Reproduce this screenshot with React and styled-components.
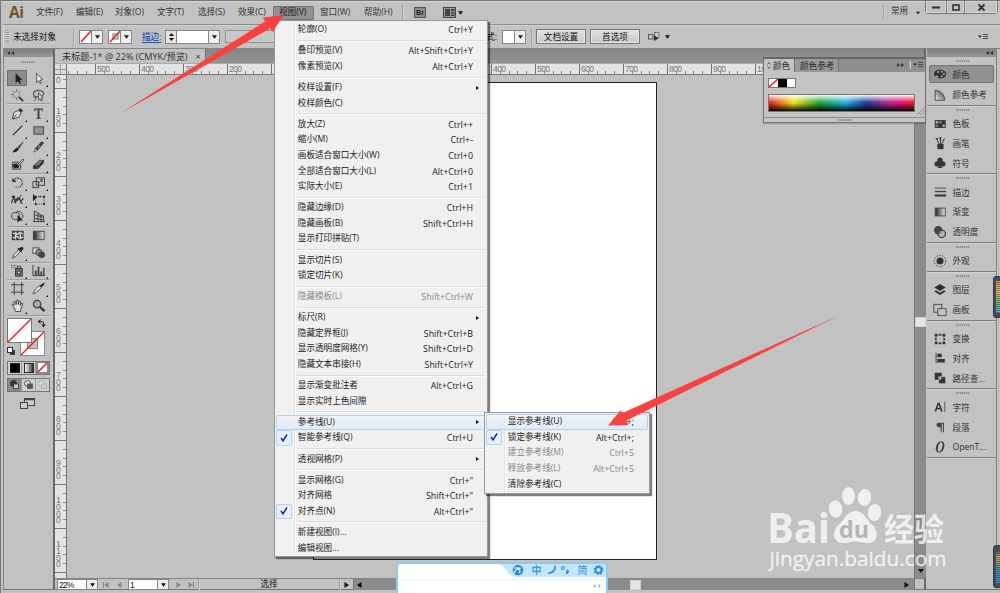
import React from "react";
import styled, { createGlobalStyle, css } from "styled-components";

const Global = createGlobalStyle`
  * { box-sizing: border-box; }
  html, body { margin: 0; padding: 0; overflow: hidden; }
  body { font-family: "Open Sans", "Noto Sans CJK SC", sans-serif; font-size: 8.6px; color: #222; }
`;

/* ---------- window frame ---------- */
const Window = styled.div`
  position: relative;
  width: 1000px;
  height: 593px;
  overflow: hidden;
  display: flex;
  flex-direction: column;
  background: #c2c2c2;
  border-top: 1px solid #777;
  border-left: 1px solid #777;
  box-shadow: inset 0 1px #d5d5d5;
`;

const MenuBar = styled.div`
  height: 23px;
  flex: none;
  display: flex;
  align-items: flex-start;
  padding-left: 8px;
`;

const Logo = styled.span`
  width: 21px;
  margin-right: 0;
  font: 700 15.5px/22px "Open Sans", sans-serif;
  letter-spacing: -0.5px;
  color: #74512b;
`;

const MenuTitle = styled.span`
  width: ${(p) => p.$w}px;
  height: 14px;
  margin-top: 5px;
  padding-left: 6px;
  line-height: 13px;
  white-space: nowrap;
  color: #333;
  ${(p) => p.$open && css`
    background: #929292;
    border: 1px solid #757575;
    border-radius: 1px;
    padding-left: 5px;
    line-height: 11px;
    color: #222;
  `}
`;

const Divider = styled.i`
  width: 1px;
  height: ${(p) => p.$h || 14}px;
  flex: none;
  margin: ${(p) => p.$m || "0"};
  background: #a0a0a0;
  box-shadow: 1px 0 #d0d0d0;
`;

const BridgeIcon = styled.span`
  width: 12px;
  height: 11px;
  margin: 6px 17px 0 11px;
  border: 1px solid #555;
  background: #8d8d8d;
  color: #222;
  font: 700 7px/9px "Liberation Sans", sans-serif;
  text-align: center;
`;

const Svg = styled.svg`
  display: block;
  flex: none;
  overflow: visible;
  margin: ${(p) => p.$m || "0"};
`;

const Workspace = styled.span`
  width: 26px;
  line-height: 20px;
  margin-left: 7px;
  color: #333;
`;

const WindowButtons = styled.div`
  display: flex;
  width: 73px;
  height: 14px;
  margin: -1px 2px 0 auto;
  border: 1px solid #777;
  border-radius: 0 0 3px 3px;
`;

const WindowButton = styled.span`
  width: ${(p) => p.$w}px;
  display: flex;
  align-items: center;
  justify-content: center;
  box-shadow: inset 0 0 0 1px #d6d6d6;
  & + & { border-left: 1px solid #777; }
`;

/* ---------- control bar ---------- */
const ControlBar = styled.div`
  height: 25px;
  flex: none;
  display: flex;
  align-items: center;
  margin-left: 2px;
  padding-left: 3px;
  border-top: 1px solid #8d8d8d;
  border-bottom: 1px solid #858585;
  box-shadow: inset 1px 1px #d2d2d2;
`;

const DotGrip = styled.i`
  width: 3px;
  height: 14px;
  margin-right: 4px;
  background: repeating-linear-gradient(#999 0 1px, #ccc 1px 2px);
`;

const Label = styled.span`
  width: ${(p) => p.$w}px;
  white-space: nowrap;
  color: #111;
  text-align: ${(p) => p.$align || "left"};
`;

const StrokeLink = styled.span`
  width: 23px;
  color: #2456bd;
  font-weight: 500;
  text-decoration: underline;
  text-underline-offset: 2px;
`;

const Combo = styled.span`
  display: flex;
  width: ${(p) => p.$w}px;
  height: ${(p) => p.$h || 14}px;
  flex: none;
  margin: ${(p) => p.$m || "0"};
  border: 1px solid #858585;
  background: #fff;
`;

const ComboValue = styled.span`
  flex: 1;
  min-width: 0;
  display: flex;
  align-items: center;
  justify-content: ${(p) => (p.$text ? "flex-start" : "center")};
  padding-left: ${(p) => (p.$text ? 1 : 0)}px;
  font: 8.5px/10px "Liberation Sans", sans-serif;
  letter-spacing: -0.9px;
  color: #111;
`;

const ComboArrow = styled.span`
  width: 11px;
  display: flex;
  align-items: center;
  justify-content: center;
  border-left: 1px solid #858585;
  background: #eee;
`;

const Stepper = styled.span`
  width: 11px;
  display: flex;
  flex-direction: column;
  align-items: center;
  justify-content: space-evenly;
  border-right: 1px solid #858585;
  background: #e4e4e4;
`;

const Field = styled.span`
  width: 53px;
  height: 13px;
  border: 1px solid #939393;
  background: #c8c8c8;
`;

const BarButton = styled.button`
  width: 50px;
  height: 15px;
  flex: none;
  margin: 0 4px 0 0;
  padding: 0;
  border: 1px solid #777;
  box-shadow: inset 0 0 0 1px #e8e8e8;
  background: linear-gradient(#e2e2e2, #c9c9c9);
  font: inherit;
  line-height: 12px;
  color: #111;
`;

/* ---------- tools panel ---------- */
const Body = styled.div`
  height: 541px;
  flex: none;
  display: flex;
  margin-left: 2px;
  border-left: 1px solid #858585;
  border-bottom: 1px solid #777;
`;

const PanelHeader = styled.div`
  height: 8px;
  flex: none;
  display: flex;
  align-items: center;
  justify-content: ${(p) => (p.$end ? "flex-end" : "flex-start")};
  padding: 0 3px;
  background: linear-gradient(#7f7f7f, #969696);
`;

const Tools = styled.div`
  width: 49px;
  flex: none;
  display: flex;
  flex-direction: column;
  background: #c2c2c2;
`;

const Grip = styled.i`
  display: block;
  width: 14px;
  height: 2px;
  margin: ${(p) => p.$m || "0 auto"};
  background: repeating-linear-gradient(90deg, #8c8c8c 0 1px, #b4b4b4 1px 2px);
`;

const ToolGroup = styled.div`
  display: grid;
  grid-template-columns: 21px 21px;
  grid-auto-rows: ${(p) => p.$row || 16.8}px;
  margin: 0 3px;
  padding: ${(p) => p.$p || "1px 0"};
  border-bottom: 1px solid ${(p) => (p.$plain ? "transparent" : "#9d9d9d")};
  box-shadow: 0 1px ${(p) => (p.$plain ? "transparent" : "#cfcfcf")};
`;

const Tool = styled.span`
  position: relative;
  display: flex;
  align-items: center;
  justify-content: center;
  ${(p) => p.$active && css`
    width: 20px;
    height: 16px;
    background: #8b8b8b;
    border: 1px solid #707070;
  `}
  ${(p) => p.$more && css`
    &::after {
      content: "";
      position: absolute;
      right: 1px;
      bottom: 0;
      border: 1.3px solid #111;
      border-top-color: transparent;
      border-left-color: transparent;
    }
  `}
`;

const ButtonTrio = styled.div`
  display: flex;
  width: 43px;
  height: 14px;
  margin: ${(p) => p.$m};
  border: 1px solid #777;
`;

const TrioButton = styled.span`
  flex: 1;
  display: flex;
  align-items: center;
  justify-content: center;
  background: ${(p) => (p.$on ? "#8a8a8a" : "#cfcfcf")};
  & + & { border-left: 1px solid #999; }
`;

const ColorChip = styled.i`
  width: 10px;
  height: 10px;
  border: 1px solid #222;
  background: ${(p) => p.$bg};
`;

/* ---------- document ---------- */
const Doc = styled.div`
  width: 873px;
  flex: none;
  display: flex;
  flex-direction: column;
  border-left: 2px solid #696969;
  border-right: 2px solid #696969;
`;

const TabRow = styled.div`
  height: 14px;
  flex: none;
  background: linear-gradient(#868686, #949494);
`;

const Tab = styled.div`
  width: 151px;
  height: 14px;
  display: flex;
  align-items: center;
  padding-left: 7px;
  border-right: 1px solid #777;
  background: #c2c2c2;
  font-size: 9.15px;
  color: #333;
  white-space: nowrap;
`;

const TabClose = styled.span`
  margin-left: 8px;
  font-size: 9px;
`;

const TopRuler = styled.div`
  height: 12px;
  flex: none;
  display: flex;
  overflow: hidden;
  background: #e3e3e3;
  border-top: 1px solid #aaa;
  border-bottom: 1px solid #7a7a7a;
`;

const RulerCorner = styled.span`
  width: 12px;
  flex: none;
  border-right: 1px solid #777;
  background:
    linear-gradient(90deg, transparent 5px, #999 5px 6px, transparent 6px),
    linear-gradient(transparent 5px, #999 5px 6px, transparent 6px), #ddd;
`;

const RulerLead = styled.span`
  width: 28px;
  flex: none;
  background: repeating-linear-gradient(90deg, transparent 0 1.2px, #888 1.2px 2.2px, transparent 2.2px 8.8px) 0 100% / 100% 3px no-repeat;
`;

const RulerCell = styled.span`
  width: 44px;
  flex: none;
  padding-left: 1px;
  border-left: 1px solid #777;
  font: 8.6px/10px "Liberation Sans", sans-serif;
  letter-spacing: -0.6px;
  color: #777;
  background: repeating-linear-gradient(90deg, transparent 0 7.8px, #888 7.8px 8.8px) 0 100% / 100% 3px no-repeat;
`;

const DocMain = styled.div`
  height: 503px;
  flex: none;
  display: flex;
`;

const SideRuler = styled.div`
  width: 12px;
  flex: none;
  overflow: hidden;
  background: #e3e3e3;
  border-right: 1px solid #777;
`;

const SideCell = styled.div`
  width: 11px;
  height: ${(p) => p.$h || 44}px;
  display: flex;
  flex-direction: column;
  justify-content: flex-end;
  padding: 0 0 4px 1px;
  border-bottom: 1px solid #777;
  font: 8.6px/6.7px "Liberation Sans", sans-serif;
  color: #777;
  background: repeating-linear-gradient(0deg, transparent 0 7.8px, #888 7.8px 8.8px) 100% 0 / 3px 100% no-repeat;
`;

const Canvas = styled.div`
  width: 847px;
  flex: none;
  padding: 7px 0 0 246px;
  background: #c2c2c2;
`;

const Artboard = styled.div`
  width: 344px;
  height: 478px;
  border: 1px solid #222;
  background: #fff;
`;

const VScroll = styled.div`
  width: 12px;
  flex: none;
  display: flex;
  flex-direction: column;
  align-items: center;
  justify-content: space-between;
  padding: 242px 0 5px;
  border-left: 1px solid #777;
  background: #8c8c8c;
`;

const Thumb = styled.i`
  display: block;
  width: ${(p) => p.$w || 11}px;
  height: 10px;
  background: #e6e6e6;
  border: 1px solid #d0d0d0;
`;

const Status = styled.div`
  height: 12px;
  flex: none;
  display: flex;
  align-items: center;
  border-top: 1px solid #858585;
  padding-left: 2px;
`;

const StatusText = styled.span`
  width: 140px;
  text-align: center;
  line-height: 11px;
  color: #111;
`;

const HScroll = styled.div`
  width: 562px;
  height: 11px;
  flex: none;
  display: flex;
  align-items: center;
  padding: 0 4px 0 2px;
  background: #8c8c8c;
  border-left: 1px solid #777;
  border-right: 1px solid #777;
`;

const ScrollGap = styled.span`
  flex: ${(p) => p.$grow};
`;

/* ---------- right dock ---------- */
const Dock = styled.div`
  width: 70px;
  flex: none;
  margin-left: 1px;
  border-right: 1px solid #808080;
`;

const DockGroup = styled.div`
  padding: 3px 2px 2px 2px;
  border-bottom: 1px solid #7d7d7d;
  box-shadow: 0 1px #d3d3d3;
  height: ${(p) => p.$n * 19.7 + 9.45}px;
`;

const DockItem = styled.div`
  height: ${(p) => (p.$on ? 18 : 19.7)}px;
  display: flex;
  align-items: center;
  gap: 5.5px;
  padding-left: ${(p) => (p.$on ? 3 : 4)}px;
  white-space: nowrap;
  color: #333;
  ${(p) => p.$on && css`
    margin: 0 0 1.7px;
    border: 1px solid #747474;
    border-radius: 2px;
    background: #919191;
  `}
`;

/* ---------- menus ---------- */
const Popup = styled.div`
  position: absolute;
  left: ${(p) => p.$x}px;
  top: ${(p) => p.$y}px;
  width: ${(p) => p.$w}px;
  height: ${(p) => p.$h}px;
  padding: 1px;
  border: 1px solid #989898;
  box-shadow: 2px 2px 1px rgba(0, 0, 0, 0.5);
  background: linear-gradient(90deg, #f1f1f1 19px, #e2e2e2 19px 20px, #fbfbfb 20px 21px, #f0f0f0 21px);
`;

const MenuRow = styled.div`
  height: 15.6px;
  display: flex;
  align-items: center;
  padding-right: ${(p) => p.$pr || 12}px;
  border: 1px solid transparent;
  border-radius: 2px;
  line-height: 13px;
  white-space: nowrap;
  color: ${(p) => (p.$off ? "#888" : "#1a1a1a")};
  ${(p) => p.$hover && css`
    border-color: #b4d2ee;
    background: linear-gradient(rgba(240, 245, 251, 0.7), rgba(221, 232, 245, 0.8));
  `}
`;

const CheckSlot = styled.span`
  width: 15.6px;
  height: 15.6px;
  margin: 0 6.2px 0 -1px;
  flex: none;
  display: flex;
  align-items: center;
  justify-content: center;
  border-radius: 2px;
  ${(p) => p.$checked && css`
    border: 1px solid #b2d2f2;
    background: #e6effa;
  `}
`;

const Shortcut = styled.span`
  margin-left: auto;
  font-size: 8.9px;
`;

const SubArrow = styled.i`
  margin: 0 -6px 0 auto;
  border: 2.8px solid transparent;
  border-left: 3.4px solid #111;
  border-right: 0;
`;

const MenuLine = styled.div`
  height: 1px;
  margin: 2.25px 1px 2.25px 21px;
  background: #dcdcdc;
  box-shadow: 0 1px #fcfcfc;
`;

/* ---------- floating colour panel ---------- */
const ColorPanel = styled.div`
  position: absolute;
  left: 762px;
  top: 56px;
  width: 163px;
  height: 66px;
  display: flex;
  flex-direction: column;
  border: 1px solid #777;
  border-top: 2px solid #666;
  background: #c4c4c4;
  box-shadow: 0 1px 1px rgba(0, 0, 0, 0.2);
`;

const ColorTabs = styled.div`
  height: 13px;
  flex: none;
  display: flex;
  background: #8f8f8f;
`;

const ColorTab = styled.span`
  width: ${(p) => p.$w}px;
  display: flex;
  align-items: center;
  gap: 2px;
  padding-left: ${(p) => (p.$on ? 3 : 5)}px;
  border-right: 1px solid #737373;
  background: ${(p) => (p.$on ? "#c4c4c4" : "#999")};
  color: #2b2b2b;
  white-space: nowrap;
`;

const ColorBody = styled.div`
  flex: 1;
  display: grid;
  grid-template-columns: 147px 1fr;
  align-content: start;
  padding: 6px 1px 0 4px;
  border-bottom: 1px solid #8d8d8d;
`;

const Chips = styled.div`
  grid-column: 1 / -1;
  display: flex;
  width: 28px;
  height: 10px;
  border: 1px solid #777;
`;

const Chip = styled.i`
  flex: 1;
  background: ${(p) => p.$bg};
`;

const Spectrum = styled.div`
  height: 18px;
  margin-top: 6px;
  border: 1px solid #777;
  background:
    linear-gradient(rgba(255,255,255,0.95), rgba(255,255,255,0) 45%, rgba(0,0,0,0) 50%, rgba(0,0,0,0.95)),
    linear-gradient(90deg, #e8202a, #f3e51b 17%, #21a637 35%, #27b5e8 53%, #21409c 67%, #b82c90 83%, #e5127d 91%, #e8202a);
`;

/* ---------- overlays ---------- */
const EdgeMeter = styled.div`
  position: absolute;
  left: 992px;
  top: ${(p) => p.$y}px;
  width: 9px;
  height: ${(p) => p.$h}px;
  padding: 4px 0 4px 2px;
  border: 1px solid #333a47;
  border-radius: 3px 0 0 3px;
  background: #454c5b;
  &::before {
    content: "";
    display: block;
    width: 4px;
    height: 100%;
    background:
      repeating-linear-gradient(transparent 0 1px, rgba(50, 56, 70, 0.45) 1px 2px),
      linear-gradient(${(p) => p.$colors});
  }
`;

const Ime = styled.div`
  position: absolute;
  left: 395px;
  top: 561px;
  width: 212px;
  height: 36px;
  border: 2px solid #8ccbf3;
  border-radius: 5px;
  background: linear-gradient(#fff 15px, #e3f3fd 16px, #fff 17px);
  overflow: hidden;
`;

const ImeBar = styled.div`
  display: flex;
  justify-content: flex-end;
`;

const Watermark = styled.div`
  position: absolute;
  left: 765px;
  top: 484px;
  width: 186px;
  height: 90px;
`;

const Overlay = styled.svg`
  position: absolute;
  left: -1px;
  top: -1px;
  pointer-events: none;
`;

/* ---------- data ---------- */
const viewMenu = [
  ["轮廓(O)", "Ctrl+Y"], "-",
  ["叠印预览(V)", "Alt+Shift+Ctrl+Y"], ["像素预览(X)", "Alt+Ctrl+Y"], "-",
  ["校样设置(F)", ">"], ["校样颜色(C)"], "-",
  ["放大(Z)", "Ctrl++"], ["缩小(M)", "Ctrl+-"], ["画板适合窗口大小(W)", "Ctrl+0"],
  ["全部适合窗口大小(L)", "Alt+Ctrl+0"], ["实际大小(E)", "Ctrl+1"], "-",
  ["隐藏边缘(D)", "Ctrl+H"], ["隐藏画板(B)", "Shift+Ctrl+H"], ["显示打印拼贴(T)"], "-",
  ["显示切片(S)"], ["锁定切片(K)"], "-",
  ["隐藏模板(L)", "Shift+Ctrl+W", { off: true }], "-",
  ["标尺(R)", ">"], ["隐藏定界框(J)", "Shift+Ctrl+B"], ["显示透明度网格(Y)", "Shift+Ctrl+D"],
  ["隐藏文本串接(H)", "Shift+Ctrl+Y"], "-",
  ["显示渐变批注者", "Alt+Ctrl+G"], ["显示实时上色间隙"], "-",
  ["参考线(U)", ">", { hover: true }], ["智能参考线(Q)", "Ctrl+U", { checked: true }], "-",
  ["透视网格(P)", ">"], "-",
  ["显示网格(G)", "Ctrl+\""], ["对齐网格", "Shift+Ctrl+\""], ["对齐点(N)", "Alt+Ctrl+\"", { checked: true }], "-",
  ["新建视图(I)..."], ["编辑视图..."],
];

const guidesMenu = [
  ["显示参考线(U)", "Ctrl+;", { hover: true }],
  ["锁定参考线(K)", "Alt+Ctrl+;", { checked: true }],
  ["建立参考线(M)", "Ctrl+5", { off: true }],
  ["释放参考线(L)", "Alt+Ctrl+5", { off: true }],
  ["清除参考线(C)"],
];

const S = { fill: "none", stroke: "#3c3c3c", strokeWidth: 1 };

/* Tool glyphs, drawn on a 14 x 14 grid */
const toolArt = {
  select: <path d="M5 1v11l2.6-2.4 1.6 3.4 1.6-.8-1.6-3.2 3-.3z" fill="#1e1e1e" />,
  direct: <path d="M5 1.500v10l2.300-2.300 1.500 3.300 1.300-.6-1.500-3.200 3-.3z" fill="#e8e8e8" stroke="#333" strokeWidth=".8" />,
  wand: <><path d="M8.500 8.500l4.500 4.500" stroke="#333" strokeWidth="2" /><circle cx="6" cy="6" r="3.300" {...S} stroke="#666" strokeDasharray="1.500 1" /><path d="M6 0v2M1.500 2L3 3.500M0 6h2M6 10v2M10.500 2L9 3.500M2 10l1-1" {...S} stroke="#666" /></>,
  lasso: <><ellipse cx="7" cy="5" rx="5.500" ry="3.500" {...S} stroke="#555" strokeWidth="1.300" /><path d="M3 7c-2 1 0 3 1 2s-1 3-1 4" {...S} /><path d="M7 4v8l1.800-1.600 1.200 2.600 1-.5-1-2.500 2-.3z" fill="#ddd" stroke="#333" strokeWidth=".8" /></>,
  pen: <><path d="M1.500 13L3 6l5-2.500 3 3L8.500 11z" fill="#ddd" stroke="#444" /><path d="M8 3l2-2 3 3-2 2z" fill="#333" /><path d="M1.500 13l4.500-5" {...S} /></>,
  type: <path d="M2.500 1.500h9v3h-.9c0-1.300-.5-1.900-2.600-1.900v8.800l1.600.4v.8H4.400v-.8l1.600-.4V2.600c-2.100 0-2.600.6-2.600 1.900h-.9z" fill="#3a3a3a" />,
  line: <path d="M2 12L12 2" stroke="#222" strokeWidth="1.100" />,
  rect: <rect x="2" y="3" width="10.500" height="8" fill="#929292" stroke="#444" />,
  brush: <><path d="M13 1L6.500 7.500l1.500 1.500z" fill="#555" stroke="#333" strokeWidth=".7" /><path d="M6.500 7.500C4 7.500 4 10 1 12c4 .8 7-1 7-3z" fill="#222" /></>,
  pencil: <><path d="M12.500 2L10.500.7 3.500 8 5.800 10z" fill="#444" stroke="#222" strokeWidth=".7" /><path d="M3.500 8l-1.300 4L5.800 10z" fill="#e2e2e2" stroke="#333" strokeWidth=".7" /><path d="M6.500 5L9 7.200" stroke="#bbb" /></>,
  blob: <><path d="M2 4.500h6.500M1.500 4.500v7.500h9V7" {...S} /><ellipse cx="5.500" cy="8.500" rx="3.500" ry="2.600" fill="#222" /><path d="M13 1L7 7l1 1 5.500-5z" fill="#ddd" stroke="#222" strokeWidth=".8" /></>,
  eraser: <><path d="M1.500 8.500L8 2.500h4.500L6.500 9z" fill="#777" stroke="#222" strokeWidth=".7" /><path d="M1.500 8.500v3H6v-2.500zM6.500 9v2.500L12.500 5V2.500z" fill="#333" stroke="#222" strokeWidth=".5" /></>,
  rotate: <><path d="M4 3.500A5 5 0 1 1 9 12" {...S} strokeDasharray="2 .8" strokeWidth="1.200" /><path d="M1.500 2v4.500H6z" fill="#333" /><path d="M8.500 12H3.500" {...S} strokeDasharray="1 1" /></>,
  scale: <><rect x="1" y="6" width="6" height="6.500" {...S} /><rect x="4.500" y="2" width="9" height="8" {...S} /><path d="M7 8l4-4M8.500 4H11v2.500" {...S} /></>,
  width: <><path d="M.5 11c2-7 3-7 4 0 1-4 3-8 5-4s2-1 4-1M.5 4c3-1 4 7 7 3s2 5 5 4" {...S} strokeWidth="1.500" /><circle cx="3" cy="4" r="1.300" fill="#222" /><path d="M11 2L8 7" {...S} /></>,
  free: <><path d="M1 1v8l4-4z" fill="#222" /><rect x="4" y="4" width="9" height="8" {...S} strokeDasharray="1.200 1.200" /><path d="M3 3h2v2H3zM12 3h2v2h-2zM3 11h2v2H3zM12 11h2v2h-2zM8 3h1.500v1.500H8z" fill="#222" /></>,
  builder: <><ellipse cx="5" cy="6.500" rx="4.500" ry="3.800" {...S} /><path d="M5 3c2-3 7-1 7 2 2 1 1 4-1 4" {...S} /><path d="M7 5v8.500l2-1.800 3.800-.4z" fill="#222" /></>,
  perspective: <><path d="M2.500 1v12M2.500 1l4 2v10M6.500 4l3 1v8M9.500 5.500l3 .8V13M2.500 5l10 3M2.500 9l10 1.500M1 12.500h13" {...S} /></>,
  mesh: <><rect x="1.500" y="2.500" width="11.500" height="9" fill="#555" stroke="#333" /><path d="M2 5c3-2 3 3 6 0s3 1 5 0M2 9c3 2 3-3 6 0s3-1 5 0M5 3c2 3-2 5 0 8M10 3c-2 3 2 5 0 8" fill="none" stroke="#e3e3e3" strokeWidth="1.200" /></>,
  gradient: <rect x="1.500" y="2.500" width="11.500" height="9" fill="url(#toolGradient)" stroke="#444" />,
  dropper: <><path d="M13 1.500C12 0 10.500 1 9 2.500L8 2 7 3l4 4 1-1-.7-1C13 3.500 14 2.500 13 1.500z" fill="#222" /><path d="M8 4L3 9.500 1.500 13l3.500-1.500L10 6z" fill="#ddd" stroke="#333" strokeWidth=".8" /></>,
  blend: <><rect x="1" y="2" width="6.500" height="6" fill="#ddd" stroke="#444" /><circle cx="7.500" cy="7" r="3.500" fill="#888" stroke="#444" /><circle cx="10.500" cy="9.500" r="3.500" fill="#444" /></>,
  spray: <><rect x="5" y="5" width="7" height="8" fill="#777" stroke="#222" /><path d="M7 5V2.500h3.500V5" {...S} /><circle cx="8.500" cy="9" r="1.700" fill="#ddd" stroke="#222" /><path d="M0 1.500h1.500M2.500 1.500H4M0 4h1.500M3 4h1.500M5 2h1" {...S} /></>,
  graph: <><path d="M1 1v11.500h13" {...S} /><path d="M3 7h2v5H3zM6 3h2v9H6zM9 8h2v4H9zM12 4h1.500v8H12z" fill="#444" /></>,
  artboard: <path d="M3.500 0v14M11.500 0v14M0 3h14M0 11h14" {...S} />,
  slice: <><path d="M1 13C3 8 6 5 8 4l2 2c-2 3-5 5-9 7z" fill="#ddd" stroke="#333" strokeWidth=".8" /><path d="M8 4l4.500-3L14 2l-4 4z" fill="#222" /></>,
  hand: <path d="M3.500 9L1 6.500c0-1.500 1.500-1 2.500.5L3 3c.5-1.500 1.500-1 2 1l.5 2L6 1.500C7 .5 7.500 1 7.800 2v4l1-3.500c1-1 1.600 0 1.400 1L10 7l1.500-2.500c1-.5 1.500.5 1 1.500L10.500 11v2.500H5z" fill="#e2e2e2" stroke="#333" strokeWidth=".9" />,
  zoom: <><circle cx="5.500" cy="5.500" r="4" fill="#aaa" stroke="#444" strokeWidth="1.400" /><path d="M8.500 8.500l5 4.500" stroke="#333" strokeWidth="2.400" /></>,
};

const toolGroups = [
  { row: 16.7, p: "0", items: [["select", 0, 1], ["direct", 1], ["wand"], ["lasso"]] },
  { row: 16.8, p: "1px 0 0", items: [["pen", 1], ["type", 1], ["line", 1], ["rect", 1], ["brush"], ["pencil", 1], ["blob"], ["eraser", 1]] },
  { row: 17, p: "0 0 1px", items: [["rotate", 1], ["scale", 1], ["width", 1], ["free"], ["builder", 1], ["perspective", 1]] },
  { row: 17, p: "0 0 1px", items: [["mesh"], ["gradient"], ["dropper", 1], ["blend"]] },
  { row: 16, p: "0", items: [["spray", 1], ["graph", 1]] },
  { row: 17, p: "0 0 1px", items: [["artboard"], ["slice", 1], ["hand", 1], ["zoom"]] },
];

/* Dock glyphs, drawn on a 16 x 16 grid */
const dockArt = {
  palette: <><path d="M8 3c4 0 7 2 7 5s-3 5-7 5c-2 0-3-1-2-2s0-2-2-1-3-.500-3-2c0-3 3-5 7-5z" fill="#333" /><circle cx="6" cy="5.800" r="1.200" fill="#aaa" /><circle cx="10" cy="5.500" r="1.200" fill="#aaa" /><circle cx="12.500" cy="8" r="1.200" fill="#aaa" /><circle cx="10" cy="10.500" r="1.200" fill="#aaa" /></>,
  guide: <path d="M2.500 2.500v11.500h11C13.500 8 9 3 2.500 2.500z" fill="url(#guideGradient)" stroke="#444" />,
  swatches: <><path d="M2 3.500h12.500v9H2z" fill="#333" /><path d="M3 4.500h3v3H3zM11 8.500h2.500v3H11z" fill="#aaa" /><path d="M7 4.500h3v3H7zM3 8.500h3v3H3z" fill="#777" /></>,
  brushes: <><path d="M5 9h7v6H5z" fill="#333" /><path d="M7 9L4.500 4M8.500 9V3M10 9l2.500-5" stroke="#444" strokeWidth="1.200" /><path d="M2.500 2.500l3-.5-.5 3zM7.500 1h2v3h-2zM13.500 2l-2 2.500 1 1.500z" fill="#333" /></>,
  club: <><circle cx="8" cy="4.800" r="3" fill="#333" /><circle cx="4.800" cy="9" r="3" fill="#333" /><circle cx="11.200" cy="9" r="3" fill="#333" /><path d="M7.200 7h1.600l.4 5 1.800 1.800H5L6.800 12z" fill="#333" /></>,
  stroke: <><path d="M2 3.500h13" stroke="#444" strokeWidth="1" /><path d="M2 7.500h13" stroke="#444" strokeWidth="1.600" /><path d="M2 12h13" stroke="#333" strokeWidth="2.300" /></>,
  gradient: <rect x="2.500" y="3.500" width="11.500" height="9" fill="url(#toolGradient)" stroke="#444" />,
  opacity: <><circle cx="6" cy="6" r="4.800" fill="#444" /><circle cx="10" cy="10" r="4.300" fill="#aaa" fillOpacity=".6" stroke="#333" strokeWidth="1.300" /></>,
  appearance: <><circle cx="8" cy="8" r="4" fill="#333" /><circle cx="8" cy="8" r="6.500" fill="none" stroke="#333" strokeDasharray="1.700 1.500" /></>,
  layers: <><path d="M8 1l6.500 4L8 9 1.500 5z" fill="#2e2e2e" /><path d="M3.500 8.200L8 11l4.500-2.800 2 1.300L8 13.800 1.500 9.500z" fill="#2e2e2e" /></>,
  boards: <><rect x="1" y="1.500" width="9" height="9" {...S} /><rect x="5.500" y="6.500" width="9.500" height="8" fill="#c2c2c2" stroke="#444" /></>,
  transform: <><rect x="3.500" y="3.500" width="9" height="9" {...S} strokeDasharray="1.500 1" /><path d="M2 2h3v3H2zM11 2h3v3h-3zM2 11h3v3H2zM11 11h3v3h-3zM7 2h2v2H7zM7 12h2v2H7zM2 7h2v2H2zM12 7h2v2h-2z" fill="#333" /></>,
  align: <path d="M3 2h1v12H3zM5 3h5v4H5zM5 9h8.500v4H5z" fill="#333" />,
  pathfinder: <><path d="M2 2h8v8H2z" fill="#333" /><path d="M6.500 6.500h8v8h-8z" fill="#333" stroke="#c2c2c2" strokeWidth=".8" /><path d="M7 7h2.500v2.500H7z" fill="#ccc" /></>,
  character: <><path d="M5.300 3h2.200l3.700 10H9l-.8-2.400H4.500L3.700 13H1.600zM5 9h2.700L6.400 5z" fill="#333" fillRule="evenodd" /><path d="M13.500 2v12" stroke="#555" strokeWidth="1" /></>,
  paragraph: <path d="M7 3h5.500v11h-1.200V4.300h-1.300V14H8.800V8.500C5.500 8.500 4 7.500 4 5.700S5 3 7 3z" fill="#444" />,
  opentype: <path fillRule="evenodd" d="M9.500 1.500c6 0 4 13-2.500 13s-4-13 2.500-13zm0 1C6 2.500 4 13.500 7 13.500s5.500-11 2.500-11z" fill="#444" />,
};

const dockGroups = [
  [["palette", "颜色", 1], ["guide", "颜色参考"]],
  [["swatches", "色板"], ["brushes", "画笔"], ["club", "符号"]],
  [["stroke", "描边"], ["gradient", "渐变"], ["opacity", "透明度"]],
  [["appearance", "外观"]],
  [["layers", "图层"], ["boards", "画板"]],
  [["transform", "变换"], ["align", "对齐"], ["pathfinder", "路径查..."]],
  [["character", "字符"], ["paragraph", "段落"], ["opentype", "OpenT..."]],
];

/* ---------- small drawings ---------- */
const Down = ({ m, w = 6 }) => (
  <Svg width={w} height="4" viewBox="0 0 6 4" $m={m}><path d="M0 0h6L3 4z" fill="#111" /></Svg>
);
const Side = ({ left, bar, color = "#111", m }) => (
  <Svg width="6" height="6" viewBox="0 0 6 6" $m={m}>
    <g transform={left ? "translate(6 0) scale(-1 1)" : undefined}>
      <path d="M0.500 0v6L5 3z" fill={color} />
      {bar && <path d="M5.500 0v6" stroke={color} />}
    </g>
  </Svg>
);
const Chevrons = ({ right, m }) => (
  <Svg width="7" height="4" viewBox="0 0 7 4" $m={m}>
    <path d={right ? "M0 0v4l3-2zM4 0v4l3-2z" : "M3 0v4L0 2zM7 0v4L4 2z"} fill="#333" />
  </Svg>
);
const NoneSwatch = ({ ring, w = 10, h = 11 }) => (
  <Svg width={w} height={h} viewBox="0 0 10 11" preserveAspectRatio="none">
    <rect width="10" height="11" fill="#fff" />
    {ring && <rect x="3" y="3" width="5" height="5" fill="#ddd" stroke="#777" />}
    <path d="M0 11L10 0" stroke="#e8202a" strokeWidth="1.600" />
  </Svg>
);
const MenuIcon = ({ m }) => (
  <Svg width="10" height="8" viewBox="0 0 10 8" $m={m}>
    <path d="M0 2.500h4L2 5z" fill="#333" />
    <path d="M5 1.500h5M5 3.500h5M5 5.500h5" stroke="#444" strokeWidth=".9" />
  </Svg>
);

function FillStroke() {
  return (
    <Svg width="43" height="41" viewBox="0 0 43 41" $m="2px 0 0 3px">
      <rect x="13.500" y="13.500" width="24" height="24" fill="#fff" stroke="#888" />
      <rect x="20.500" y="20.500" width="10" height="10" fill="#c2c2c2" stroke="#888" />
      <path d="M14 37L37 14" stroke="#e8202a" strokeWidth="1.500" />
      <rect x=".5" y=".5" width="24" height="24" fill="#fff" stroke="#777" />
      <path d="M1 24L24 1" stroke="#e8202a" strokeWidth="1.500" />
      <path d="M32 3.500h2.500q2 0 2 2v2" fill="none" stroke="#333" strokeWidth="1.200" />
      <path d="M30.500 3.500L33.500 1v5zM36.500 9.500L34 6.500h5z" fill="#333" />
      <rect x="3" y="32" width="5" height="5" fill="#333" />
      <rect x=".5" y="29.500" width="5" height="5" fill="#fff" stroke="#333" />
    </Svg>
  );
}

function Menu({ items, pr, ...box }) {
  return (
    <Popup {...box}>
      {items.map((it, i) => {
        if (it === "-") return <MenuLine key={i} />;
        const [label, key, o = {}] = it;
        return (
          <MenuRow key={i} $off={o.off} $hover={o.hover} $pr={pr}>
            <CheckSlot $checked={o.checked}>
              {o.checked && <Svg width="8" height="8" viewBox="0 0 8 8"><path d="M1 4l2 2.800L7 .5" fill="none" stroke="#2222ad" strokeWidth="1.500" /></Svg>}
            </CheckSlot>
            <span>{label}</span>
            {key === ">" ? <SubArrow /> : key && <Shortcut>{key}</Shortcut>}
          </MenuRow>
        );
      })}
    </Popup>
  );
}

function TopMenu() {
  const titles = [["文件(F)", 40], ["编辑(E)", 39], ["对象(O)", 42], ["文字(T)", 41], ["选择(S)", 40], ["效果(C)", 41], ["视图(V)", 41, 1], ["窗口(W)", 44], ["帮助(H)", 44]];
  return (
    <MenuBar>
      <Logo>Ai</Logo>
      {titles.map(([t, w, open]) => <MenuTitle key={t} $w={w} $open={open}>{t}</MenuTitle>)}
      <Divider $m="4px 0 0 0" />
      <BridgeIcon>Br</BridgeIcon>
      <Svg width="13" height="11" viewBox="0 0 13 11" $m="6px 2px 0 0">
        <rect x=".5" y=".5" width="12" height="10" fill="#999" stroke="#444" />
        <path d="M2 2h5v7H2zM8 2h3.500v2H8zM8 5h3.500v1.500H8zM8 7.500h3.500V9H8z" fill="#444" />
      </Svg>
      <Down w={5} m="10px 0 0 0" />
      <Divider $m="4px 0 0 420px" />
      <Workspace>常用</Workspace>
      <Down w={4} m="10px 0 0 -1px" />
      <WindowButtons>
        <WindowButton $w={20}><Svg width="8" height="3"><path d="M0 1.500h8" stroke="#333" strokeWidth="2" /></Svg></WindowButton>
        <WindowButton $w={19}><Svg width="8" height="7"><rect x="1" y="1" width="6" height="5" fill="none" stroke="#333" strokeWidth="1.600" /></Svg></WindowButton>
        <WindowButton $w={33}><Svg width="7" height="7"><path d="M.5.5l6 6M6.500.5l-6 6" stroke="#333" strokeWidth="1.800" /></Svg></WindowButton>
      </WindowButtons>
    </MenuBar>
  );
}

function Controls() {
  return (
    <ControlBar>
      <DotGrip />
      <Label $w={60}>未选择对象</Label>
      <Divider $h={18} $m="0 5px 0 0" />
      <Combo $w={24}><ComboValue><NoneSwatch /></ComboValue><ComboArrow><Down w={5} /></ComboArrow></Combo>
      <Combo $w={24} $m="0 10px 0 5px"><ComboValue><NoneSwatch ring /></ComboValue><ComboArrow><Down w={5} /></ComboArrow></Combo>
      <StrokeLink>描边:</StrokeLink>
      <Combo $w={55} $m="0 5px 0 0">
        <Stepper>
          <Svg width="5" height="3" viewBox="0 0 5 3"><path d="M0 3h5L2.500 0z" fill="#111" /></Svg>
          <Svg width="5" height="3" viewBox="0 0 5 3"><path d="M0 0h5L2.500 3z" fill="#111" /></Svg>
        </Stepper>
        <ComboValue />
        <ComboArrow><Down w={5} /></ComboArrow>
      </Combo>
      <Field />
      <Label $w={219} $align="right">样式:</Label>
      <Combo $w={24} $m="0 5px"><ComboValue /><ComboArrow><Down w={5} /></ComboArrow></Combo>
      <Divider $h={18} $m="0 4px 0 0" />
      <BarButton>文档设置</BarButton>
      <BarButton>首选项</BarButton>
      <Svg width="12" height="10" viewBox="0 0 12 10" $m="0 5px 0 4px">
        <rect x=".5" y="2.500" width="4.500" height="4.500" {...S} stroke="#555" />
        <rect x="6.500" y=".5" width="4.500" height="5" {...S} stroke="#555" strokeDasharray="2 1" />
        <path d="M6 3v6l4.500-2.500z" fill="#333" />
      </Svg>
      <Down w={5} />
      <MenuIcon m="0 0 0 308px" />
    </ControlBar>
  );
}

function ToolPanel() {
  return (
    <Tools>
      <PanelHeader><Chevrons /></PanelHeader>
      <Grip $m="4px 0 7px 17px" />
      {toolGroups.map((g, i) => (
        <ToolGroup key={i} $row={g.row} $p={g.p}>
          {g.items.map(([id, more, active]) => (
            <Tool key={id} $more={more} $active={active}>
              <Svg width="13" height="13" viewBox="0 0 14 14">{toolArt[id]}</Svg>
            </Tool>
          ))}
        </ToolGroup>
      ))}
      <FillStroke />
      <ButtonTrio $m="2px 0 3px 3px">
        <TrioButton><ColorChip $bg="#000" /></TrioButton>
        <TrioButton><ColorChip $bg="linear-gradient(90deg,#fff,#333)" /></TrioButton>
        <TrioButton $on><NoneSwatch w={9} h={9} /></TrioButton>
      </ButtonTrio>
      <ButtonTrio $m="0 0 6px 3px">
        {["#333", "#555", "#aaa"].map((c, i) => (
          <TrioButton key={c} $on={i === 0}>
            <Svg width="9" height="9" viewBox="0 0 9 9">
              <circle cx="3.500" cy="3.500" r="3" fill={i === 0 ? c : "#ddd"} stroke={c} />
              <rect x="3.500" y="4" width="5" height="4.500" fill={i === 1 ? c : "#ccc"} stroke={c} strokeWidth=".8" />
            </Svg>
          </TrioButton>
        ))}
      </ButtonTrio>
      <Svg width="15" height="11" viewBox="0 0 15 11" $m="0 0 0 16px">
        <rect x="4.500" y=".5" width="10" height="7" fill="#ccc" stroke="#444" />
        <path d="M4 1.500h11" stroke="#444" strokeWidth="1.500" />
        <rect x=".5" y="4.500" width="7" height="6" fill="#ccc" stroke="#444" />
      </Svg>
    </Tools>
  );
}

function DocumentArea() {
  const top = [500, 400, 300, 200, "", "", "", "", "", 400, 500, 600, 700, 800, 900, "10", "", "", ""];
  const side = ["100", "200", "300", "400", "500", "600", "700", "800", "900", "1000", "1100"];
  return (
    <Doc>
      <TabRow><Tab>未标题-1* @ 22% (CMYK/预览)<TabClose>×</TabClose></Tab></TabRow>
      <TopRuler>
        <RulerCorner />
        <RulerLead />
        {top.map((n, i) => <RulerCell key={i}>{n}</RulerCell>)}
      </TopRuler>
      <DocMain>
        <SideRuler>
          <SideCell $h={14}>0</SideCell>
          {side.map((n) => <SideCell key={n}>{n.split("").map((d, i) => <span key={i}>{d}</span>)}</SideCell>)}
        </SideRuler>
        <Canvas><Artboard /></Canvas>
        <VScroll><Thumb /><Down /></VScroll>
      </DocMain>
      <Status>
        <Combo $w={41} $h={11}><ComboValue $text>22%</ComboValue><ComboArrow><Down w={5} /></ComboArrow></Combo>
        <Side left bar color="#888" m="0 7px 0 5px" />
        <Side left color="#888" m="0 6px 0 0" />
        <Combo $w={41} $h={11}><ComboValue $text>1</ComboValue><ComboArrow><Down w={5} /></ComboArrow></Combo>
        <Side color="#888" m="0 6px 0 7px" />
        <Side bar color="#888" m="0 4px 0 0" />
        <Divider $h={11} />
        <StatusText>选择</StatusText>
        <Divider $h={11} />
        <Side m="0 3px 0 4px" />
        <HScroll>
          <Side left />
          <ScrollGap $grow={267} />
          <Thumb />
          <ScrollGap $grow={263} />
          <Side />
        </HScroll>
      </Status>
    </Doc>
  );
}

function DockPanel() {
  return (
    <Dock>
      <PanelHeader $end><Chevrons /></PanelHeader>
      {dockGroups.map((g, i) => (
        <DockGroup key={i} $n={g.length}>
          <Grip $m="0 0 3px 27px" />
          {g.map(([id, label, on]) => (
            <DockItem key={id} $on={on}>
              <Svg width="14" height="14" viewBox="0 0 16 16">{dockArt[id]}</Svg>
              {label}
            </DockItem>
          ))}
        </DockGroup>
      ))}
    </Dock>
  );
}

function FloatingColor() {
  return (
    <ColorPanel>
      <ColorTabs>
        <ColorTab $on $w={31}>
          <Svg width="4" height="7" viewBox="0 0 4 7"><path d="M.5 2.500L2 .5l1.500 2M.5 4.500L2 6.500l1.500-2" fill="none" stroke="#444" strokeWidth=".8" /></Svg>
          颜色
        </ColorTab>
        <ColorTab $w={44}>颜色参考</ColorTab>
        <Chevrons right m="4px 5px 0 58px" />
        <Divider $h={8} $m="2px 3px 0 0" />
        <MenuIcon m="2px 0 0 0" />
      </ColorTabs>
      <ColorBody>
        <Chips>
          <NoneSwatch w={9} h={8} />
          <Chip $bg="#000" />
          <Chip $bg="#fff" />
        </Chips>
        <Spectrum />
        <Svg width="8" height="8" viewBox="0 0 8 8" $m="19px 0 0 2px">
          <path d="M0 8L8 0M3 8l5-5M6 8l2-2" stroke="#8e8e8e" strokeWidth=".9" />
        </Svg>
      </ColorBody>
      <Grip $m="1px auto 1px" />
    </ColorPanel>
  );
}

function InputBar() {
  return (
    <Ime>
      <ImeBar>
        <Svg width="106" height="26" viewBox="0 0 106 26">
          <path d="M-4 0h110v13H17Q10 13 6 6 3 0-4 0z" fill="#c4e6fb" />
          <circle cx="18" cy="6" r="5.300" fill="#2b86dc" />
          <path d="M14 4h7M21 4q-6 1-7 5M17 5q5 1 2 4" stroke="#fff" fill="none" strokeWidth="1.200" />
          <text x="31.500" y="9.500" fontSize="10" fontWeight="700" fill="#3d97e4">中</text>
          <path d="M55 1.500c1.500 5-2 8.500-7 7.500 4-.5 7-3 7-7.500z" fill="#2b8be0" stroke="#2b8be0" strokeWidth="1" />
          <circle cx="63" cy="4" r="1.600" fill="none" stroke="#2b8be0" />
          <path d="M67 6c2 0 2 3-.5 4z" fill="#2b8be0" stroke="#2b8be0" />
          <text x="77.500" y="9.500" fontSize="10" fill="#2b8be0">简</text>
          <circle cx="98.500" cy="6" r="3" fill="none" stroke="#2b8be0" strokeWidth="1.800" />
          <circle cx="98.500" cy="6" r="4.400" fill="none" stroke="#2b8be0" strokeWidth="1.200" strokeDasharray="1.700 1.755" />
          <path d="M95.500 20v4L93 22zM98.500 20v4l2.500-2z" fill="#aaa" />
        </Svg>
      </ImeBar>
    </Ime>
  );
}

function BaiduMark() {
  return (
    <Watermark>
      <svg width="186" height="90" viewBox="0 0 186 90" fill="#fff" fillOpacity=".75">
        <text x="1" y="57.500" fontFamily="Open Sans" fontWeight="700" fontSize="41" textLength="63" lengthAdjust="spacingAndGlyphs">Bai</text>
        <ellipse cx="69.500" cy="24" rx="6.700" ry="8.500" transform="rotate(-6 69.500 24)" />
        <ellipse cx="82.500" cy="11" rx="6.300" ry="9" />
        <ellipse cx="98.500" cy="12.500" rx="6.700" ry="8.600" transform="rotate(8 98.500 12.500)" />
        <ellipse cx="108.500" cy="27.500" rx="6.700" ry="8.500" transform="rotate(6 108.500 27.500)" />
        <path d="M89.500 26c8 0 10 7 15 12 9 7 9 20-3 20-5 0-7-1.500-12-1.500s-7 1.500-12 1.500c-12 0-12-13-3-20 5-5 7-12 15-12z" />
        <text x="73" y="53" fontFamily="Open Sans" fontWeight="700" fontSize="24" fill="#b4b4b4" fillOpacity="1" textLength="30" lengthAdjust="spacingAndGlyphs">du</text>
        <text x="118" y="55.500" fontFamily="Noto Sans CJK SC" fontWeight="700" fontSize="32" textLength="60" lengthAdjust="spacingAndGlyphs">经验</text>
        <text x="3.500" y="81" fontFamily="Open Sans" fontSize="20" stroke="#fff" strokeOpacity=".5" strokeWidth=".5" textLength="177" lengthAdjust="spacingAndGlyphs">jingyan.baidu.com</text>
      </svg>
    </Watermark>
  );
}

export default function App() {
  return (
    <>
      <Global />
      <Window>
        <Overlay width="0" height="0">
          <linearGradient id="toolGradient"><stop offset="0" stopColor="#222" /><stop offset="1" stopColor="#e6e6e6" /></linearGradient>
          <linearGradient id="guideGradient" x1="0" y1="1" x2="1" y2="0"><stop offset="0" stopColor="#f2f2f2" /><stop offset="1" stopColor="#333" /></linearGradient>
        </Overlay>
        <TopMenu />
        <Controls />
        <Body>
          <ToolPanel />
          <DocumentArea />
          <DockPanel />
        </Body>
        <FloatingColor />
        <Menu items={viewMenu} $x={273} $y={19} $w={214} $h={537} />
        <Menu items={guidesMenu} pr={13} $x={483} $y={411} $w={166} $h={82} />
        <EdgeMeter $y={275} $h={42} $colors="#d98a4b, #d5c34f 35%, #6fb56c 70%, #3bb3c0" />
        <EdgeMeter $y={544} $h={43} $colors="#444, #d0a23e 20%, #4ca16f 50%, #2f8fd0 65%" />
        <BaiduMark />
        <InputBar />
        <Overlay width="1000" height="593" viewBox="0 0 1000 593">
          <path d="M121 113L265 21.500 263 17.500 284 15 272.500 32 270 28.500z" fill="#fb4040" />
          <path d="M840 315L622.500 413 620.500 410.500 608 425.500 628.500 425 626.500 420.500z" fill="#fb4040" />
        </Overlay>
      </Window>
    </>
  );
}
